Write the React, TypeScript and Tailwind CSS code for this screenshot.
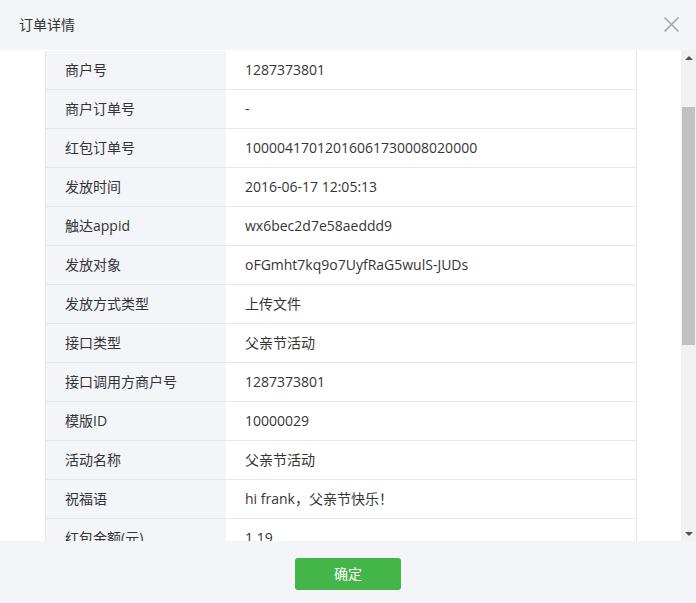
import React from 'react';

const rows: [string, string][] = [
  ['商户号', '1287373801'],
  ['商户订单号', '-'],
  ['红包订单号', '10000417012016061730008020000'],
  ['发放时间', '2016-06-17 12:05:13'],
  ['触达appid', 'wx6bec2d7e58aeddd9'],
  ['发放对象', 'oFGmht7kq9o7UyfRaG5wulS-JUDs'],
  ['发放方式类型', '上传文件'],
  ['接口类型', '父亲节活动'],
  ['接口调用方商户号', '1287373801'],
  ['模版ID', '10000029'],
  ['活动名称', '父亲节活动'],
  ['祝福语', 'hi frank，父亲节快乐！'],
  ['红包金额(元)', '1.19'],
  ['红包状态', '已领取'],
  ['领取时间', '2016-06-17 12:06:02'],
];

export default function App() {
  return (
    <div
      className="w-[696px] h-[603px] flex flex-col bg-[#f4f5f9] text-[14px] text-[#353535]"
      style={{ fontFamily: '"Open Sans", "Noto Sans CJK SC", sans-serif' }}
    >
      {/* 标题栏 */}
      <div className="h-[50px] shrink-0 flex items-center justify-between pl-[19px] pr-[16px] pb-[2px]">
        <span className="text-[#333]">订单详情</span>
        <svg width="17" height="17" viewBox="0 0 17 17" className="text-[#a3a3a3]">
          <path d="M1.5 1.5 L15.5 15.5 M15.5 1.5 L1.5 15.5" stroke="currentColor" strokeWidth="1.6" fill="none" />
        </svg>
      </div>

      {/* 内容区 */}
      <div className="h-[491px] shrink-0 flex bg-white">
        <div className="flex-1 overflow-hidden pl-[45px] pr-[44px] pt-[1px]">
          <div className="border-l border-r border-[#e7e7eb]">
            {rows.map(([label, value]) => (
              <div key={label} className="flex h-[39px] border-b border-[#e7e7eb]">
                <div className="w-[180px] shrink-0 bg-[#f4f5f9] flex items-center pl-[19px] pb-[2px] text-[#333]">{label}</div>
                <div className="flex-1 flex items-center pl-[19px] pb-[2px]">{value}</div>
              </div>
            ))}
          </div>
        </div>
        {/* 滚动条 */}
        <div className="w-[15px] shrink-0 flex flex-col bg-[#f1f1f1]">
          <div className="h-[15px] flex items-center justify-center">
            <div className="w-0 h-0 border-l-[4px] border-r-[4px] border-b-[4px] border-l-transparent border-r-transparent border-b-[#505050]" />
          </div>
          <div className="h-[42px]" />
          <div className="h-[238px] mx-[1px] bg-[#c1c1c1]" />
          <div className="flex-1" />
          <div className="h-[15px] flex items-center justify-center">
            <div className="w-0 h-0 border-l-[4px] border-r-[4px] border-t-[4px] border-l-transparent border-r-transparent border-t-[#505050]" />
          </div>
        </div>
      </div>

      {/* 底部按钮 */}
      <div className="flex-1 flex justify-center pt-[17px]">
        <button className="w-[106px] h-[32px] rounded-[3px] bg-[#44b549] text-white text-[14px] pb-[2px]">确定</button>
      </div>
    </div>
  );
}
